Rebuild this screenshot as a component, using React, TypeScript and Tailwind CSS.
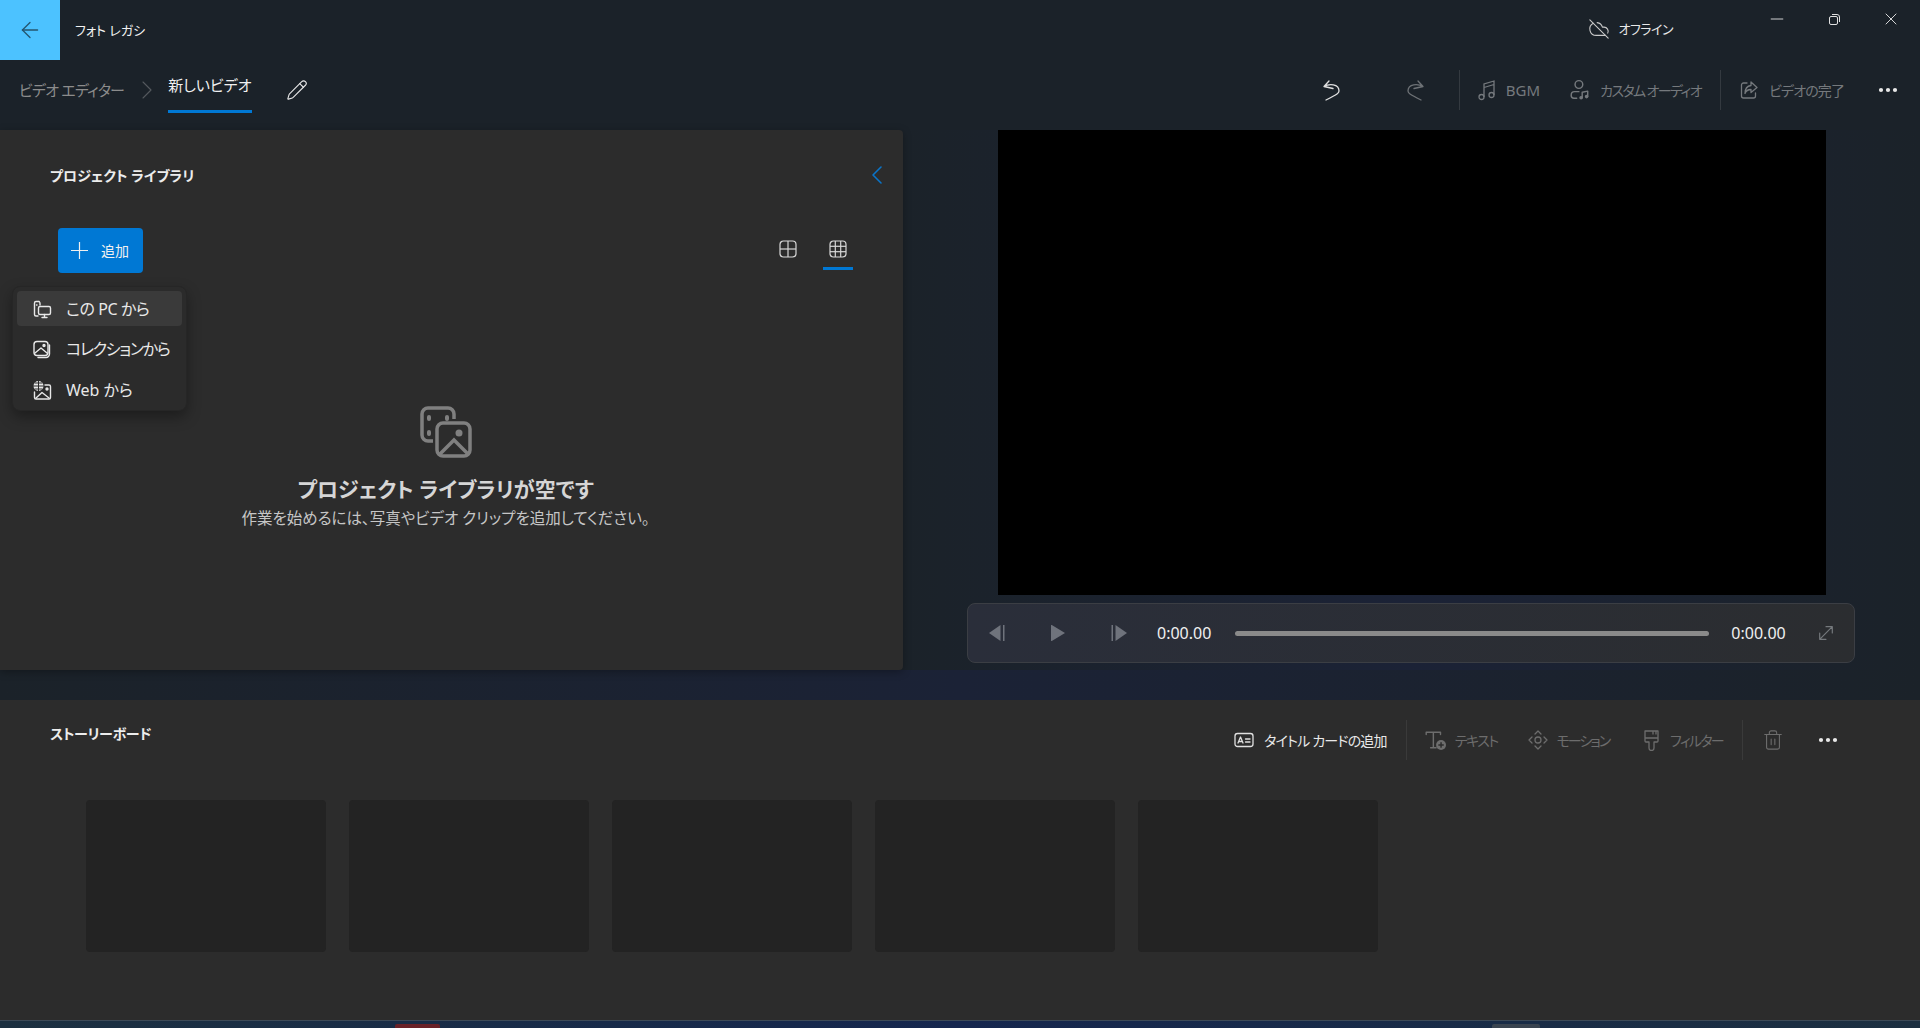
import React from 'react';
import { ArrowLeft, ChevronLeft, ChevronRight, Minus, X, MoreHorizontal, CloudOff, Pencil, Trash2 } from 'lucide-react';

const Ic = ({ s = 20, w = 1.3, children, className = '' }: { s?: number; w?: number; children: React.ReactNode; className?: string }) => (
  <svg width={s} height={s} viewBox="0 0 20 20" fill="none" stroke="currentColor" strokeWidth={w} strokeLinecap="round" strokeLinejoin="round" className={className}>
    {children}
  </svg>
);

const Divider = () => <div className="w-px h-10 bg-[#343a40]" />;

const GridIcon = ({ lines }: { lines: number[] }) => (
  <svg width="18" height="18" viewBox="0 0 18 18" fill="none" stroke="#d8d8d8" strokeWidth="1.2">
    <rect x="1" y="1" width="16" height="16" rx="3.5" />
    {lines.map(p => (
      <g key={p}>
        <path d={`M${p} 1v16`} />
        <path d={`M1 ${p}h16`} />
      </g>
    ))}
  </svg>
);

const MenuItem = ({ icon, label, active, track = '' }: { icon: React.ReactNode; label: string; active?: boolean; track?: string }) => (
  <div className={`flex items-center h-[35px] rounded-[4px] pl-[15px] ${active ? 'bg-[#3a3a3a]' : ''}`}>
    <span className="w-[20px] h-[20px] mr-[14px] text-[#e8e8e8]">{icon}</span>
    <span className={`text-[16px] text-[#e8e8e8] ${track}`}>{label}</span>
  </div>
);

const Card = () => <div className="w-[240px] h-[152px] rounded-[4px] bg-[#232323]" />;

export default function App() {
  return (
    <div className="w-full h-[1028px] overflow-hidden flex flex-col bg-[#1b2229] font-['Noto_Sans','Noto_Sans_CJK_JP',sans-serif] [font-feature-settings:'palt'] text-white">
      {/* title bar */}
      <div className="h-[60px] flex shrink-0">
        <div className="w-[60px] h-[60px] bg-[#4cc2ff] flex items-center justify-center text-[#24556f]">
          <ArrowLeft size={26} strokeWidth={1.2} />
        </div>
        <div className="ml-[15px] mt-[20px] text-[13px] leading-[20px] text-[#f2f2f2]">フォト レガシ</div>
        <div className="ml-auto flex items-start">
          <CloudOff size={22} strokeWidth={1.2} className="mt-[18px] text-[#c8c8c8]" />
          <span className="ml-[8px] mt-[19px] text-[13px] leading-[20px] tracking-[-0.5px] text-[#e8e8e8]">オフライン</span>
          <Minus size={20} strokeWidth={1.1} className="ml-[94px] mt-[9px] text-[#e0e0e0]" />
          <svg width="13" height="13" viewBox="0 0 13 13" fill="none" stroke="#e0e0e0" className="ml-[41px] mt-[13px]">
            <rect x="1.5" y="3.5" width="8" height="8" rx="1.5" />
            <path d="M4 1.5h5a2.5 2.5 0 0 1 2.5 2.5v5" />
          </svg>
          <X size={20} strokeWidth={1.1} className="ml-[40px] mr-[19px] mt-[9px] text-[#e8e8e8]" />
        </div>
      </div>

      {/* toolbar */}
      <div className="h-[70px] flex items-center pb-[10px] shrink-0">
        <span className="ml-[19px] text-[15px] tracking-[-0.8px] text-[#8c8c8c]">ビデオ エディター</span>
        <ChevronRight size={32} strokeWidth={0.8} className="ml-[7px] text-[#555a5e]" />
        <div className="ml-[5px] self-start h-[53px] pt-[13px] border-b-[3px] border-[#0078d4] text-[15px] leading-[24px] text-[#f0f0f0]">新しいビデオ</div>
        <Pencil size={22} strokeWidth={1.2} className="ml-[34px] text-[#e8e8e8]" />
        <div className="ml-auto flex items-center">
          <svg width="17" height="21" viewBox="0 0 17 21" fill="none" stroke="#e0e0e0" strokeWidth="1.3" strokeLinecap="round" strokeLinejoin="round">
            <path d="M6 1L1 6.500l9 2M1 6.500C6 3.500 16 3.500 16 11c0 2-1 3-13 9" />
          </svg>
          <svg width="17" height="21" viewBox="0 0 17 21" fill="none" stroke="#6e7276" strokeWidth="1.3" strokeLinecap="round" strokeLinejoin="round" className="ml-[67px]">
            <path d="M11 1l5 5.500-9 2M16 6.500C11 3.500 1 3.500 1 11c0 2 1 3 13 9" />
          </svg>
          <div className="ml-[35px]"><Divider /></div>
          <svg width="18" height="21" viewBox="0 0 18 21" fill="none" stroke="#75797d" strokeWidth="1.3" className="ml-[18px]">
            <circle cx="3.500" cy="17" r="2.500" />
            <circle cx="13.500" cy="15" r="2.500" />
            <path d="M6 17V4l10-3v14M6 7.500l10-3" />
          </svg>
          <span className="ml-[10px] text-[15px] text-[#75797d]">BGM</span>
          <Ic s={22} className="ml-[29px] text-[#75797d]">
            <circle cx="9" cy="5" r="3.500" />
            <path d="M9 11.500H5a3 3 0 0 0-3 3v.500a2.500 2.500 0 0 0 2.500 2.500H7" />
            <path d="M12 17v-5l5-1v5" />
            <circle cx="11" cy="17" r="1" fill="currentColor" />
            <circle cx="16" cy="16" r="1" fill="currentColor" />
          </Ic>
          <span className="ml-[9px] text-[14px] tracking-[-1.6px] text-[#75797d]">カスタム オーディオ</span>
          <div className="ml-[19px]"><Divider /></div>
          <Ic className="ml-[18px] text-[#75797d]">
            <path d="M8 3H4.500A2 2 0 0 0 2.500 5v11a2 2 0 0 0 2 2h10a2 2 0 0 0 2-2v-3" />
            <path d="M12 2l6 5.500-6 5V9.500c-3 0-5 1-6 4 0-4.500 2-7.500 6-8z" />
          </Ic>
          <span className="ml-[10px] text-[14px] tracking-[-0.9px] text-[#75797d]">ビデオの完了</span>
          <MoreHorizontal size={24} strokeWidth={2.2} className="ml-[32px] mr-[20px] text-[#e8e8e8]" />
        </div>
      </div>

      {/* library + preview */}
      <div className="h-[540px] flex shrink-0">
        <div className="relative w-[903px] h-full rounded-r-[4px] bg-[#2c2c2c] shadow-[0_2px_8px_rgba(0,0,0,0.3)] flex flex-col">
          <div className="flex items-center justify-between h-[90px] pl-[50px] pr-[10px]">
            <span className="text-[14px] font-bold text-[#ececec]">プロジェクト ライブラリ</span>
            <ChevronLeft size={32} strokeWidth={1.2} className="text-[#0a74c9]" />
          </div>
          <div className="flex items-start justify-between pl-[58px] pr-[50px] h-[178px] mt-[8px]">
            <div className="w-[85px] h-[45px] rounded-[4px] bg-[#0078d4] flex items-center pl-[13px]">
              <svg width="17" height="17" viewBox="0 0 17 17" fill="none" stroke="#f0f0f0" strokeWidth="1.200">
                <path d="M8.500 0v17M0 8.500h17" />
              </svg>
              <span className="ml-[13px] text-[14px] text-[#f0f0f0]">追加</span>
            </div>
            <div className="flex items-start">
              <div className="w-[30px] flex justify-center pt-[12px]"><GridIcon lines={[9]} /></div>
              <div className="ml-[20px] w-[30px] h-[42px] flex justify-center pt-[12px] border-b-[3px] border-[#0078d4]"><GridIcon lines={[6.3, 11.700]} /></div>
            </div>
          </div>
          <div className="flex flex-col items-center pr-[12px]">
            <svg width="52" height="52" viewBox="0 0 52 52" fill="none" stroke="#808080" strokeWidth="3.500">
              <path d="M13 35H8a6 6 0 0 1-6-6V8a6 6 0 0 1 6-6h20a6 6 0 0 1 6 6v5" />
              <path d="M9 11v2M9 26v2M27 11v2" strokeWidth="4" strokeLinecap="round" />
              <rect x="17" y="17" width="33" height="33" rx="6" />
              <circle cx="39" cy="27" r="3.500" fill="#808080" stroke="none" />
              <path d="M20 48l14-14 14 14" />
            </svg>
            <div className="mt-[14px] text-[21px] leading-[34px] font-semibold text-[#d6d6d6]">プロジェクト ライブラリが空です</div>
            <div className="text-[15.5px] leading-[24px] text-[#c6c6c6]">作業を始めるには、写真やビデオ クリップを追加してください。</div>
          </div>

          {/* add menu */}
          <div className="absolute left-[12px] top-[156px] w-[175px] h-[125px] rounded-[8px] bg-[#2b2b2b] border border-[#262626] shadow-[0_6px_14px_rgba(0,0,0,0.35)] p-[4px]">
            <MenuItem
              active
              label="この PC から"
              track="tracking-[-0.4px]"
              icon={
                <Ic w={1.4}>
                  <path d="M7 2.500H4a1.500 1.500 0 0 0-1.500 1.500v11.500a1.500 1.500 0 0 0 1.500 1.500h2" />
                  <path d="M8 6V4.500a2 2 0 0 0-1-2" />
                  <rect x="6.500" y="7.500" width="12" height="8" rx="1.500" />
                  <path d="M10 18.500h5M12.500 15.500v3M4.500 6h.5" />
                </Ic>
              }
            />
            <div className="mt-[5px]">
              <MenuItem
                label="コレクションから"
                track="tracking-[-1.3px]"
                icon={
                  <Ic w={1.4}>
                    <rect x="2" y="2.500" width="14" height="14" rx="3" />
                    <path d="M17.500 6v9a3.500 3.500 0 0 1-3.500 3.500H6" />
                    <path d="M3 14l6-5 6 5" />
                    <circle cx="12" cy="6.500" r="1" fill="currentColor" />
                  </Ic>
                }
              />
            </div>
            <div className="mt-[6px]">
              <MenuItem
                label="Web から"
                icon={
                  <Ic w={1.4}>
                    <circle cx="6.500" cy="6" r="5" fill="currentColor" stroke="none" />
                    <path d="M1.500 6h10M6.500 1v10M3 3h7M3 9h7" stroke="#2b2b2b" strokeWidth="1" />
                    <path d="M13 5h4a1.500 1.500 0 0 1 1.500 1.500v11a1.500 1.500 0 0 1-1.500 1.500H4A1.500 1.500 0 0 1 2.500 17.500V12" />
                    <path d="M4 18l6-5.500 7 5.500" />
                    <circle cx="15" cy="9" r="1" fill="currentColor" />
                  </Ic>
                }
              />
            </div>
          </div>
        </div>

        {/* preview */}
        <div className="flex-1 flex flex-col items-start pl-[64px] bg-gradient-to-r from-[#1b2229] via-[#1b2236] to-[#1b2229]">
          <div className="ml-[31px] w-[828px] h-[465px] bg-black" />
          <div className="mt-[8px] w-[888px] h-[60px] rounded-[8px] bg-gradient-to-r from-[#2a2e3a] to-[#2b2d30] border border-[#3b3e44] flex items-center">
            <svg width="18" height="18" viewBox="0 0 18 18" fill="#6f737c" className="ml-[20px]">
              <path d="M12.500 1v16L1 9zM15 1h1.500v16H15z" />
            </svg>
            <svg width="16" height="18" viewBox="0 0 16 18" fill="#6f737c" className="ml-[44px]">
              <path d="M1 1.500a.5.5 0 0 1 .8-.4L15 9 1.800 16.900a.5.5 0 0 1-.8-.4z" />
            </svg>
            <svg width="18" height="18" viewBox="0 0 18 18" fill="#6f737c" className="ml-[44px]">
              <path d="M5.500 1v16L17 9zM1.500 1H3v16H1.500z" />
            </svg>
            <span className="ml-[29px] text-[16px] text-[#f0f0f0]">0:00.00</span>
            <div className="ml-[24px] w-[474px] h-[5px] rounded-full bg-[#8a8a8a]" />
            <span className="ml-[22px] text-[16px] text-[#f0f0f0]">0:00.00</span>
            <Ic s={18} className="ml-[31px] text-[#75797d]">
              <path d="M3 17L17 3M10 3h7v7M3 10v7h7" />
            </Ic>
          </div>
        </div>
      </div>

      <div className="h-[30px] shrink-0 bg-gradient-to-r from-[#1b2229] via-[#1b2236] to-[#1b2229]" />

      {/* storyboard */}
      <div className="h-[320px] shrink-0 bg-[#2c2c2c] flex flex-col">
        <div className="h-[70px] flex items-start">
          <span className="ml-[50px] mt-[22px] text-[14px] leading-[24px] tracking-[-0.3px] font-bold text-[#ececec]">ストーリーボード</span>
          <div className="ml-auto mt-[20px] flex items-center text-[#6d6d6d]">
            <Ic className="text-[#e0e0e0]">
              <rect x="1" y="3.500" width="18" height="13" rx="2.500" />
              <path d="M4 13l2.500-6L9 13M4.800 11.500h3.400M11.500 9H16M11.500 12H16" />
            </Ic>
            <span className="ml-[10px] text-[14px] tracking-[-0.8px] text-[#e8e8e8]">タイトル カードの追加</span>
            <div className="ml-[19px]"><div className="w-px h-10 bg-[#3a3a3a]" /></div>
            <Ic s={22} className="ml-[17px]">
              <path d="M2 3h13M8.500 3v14M6 17h5M2 3v2M15 3v2" />
              <circle cx="15.500" cy="14.500" r="4.500" fill="currentColor" stroke="none" />
              <path d="M15.500 12.500v4M13.500 14.500h4" stroke="#2c2c2c" />
            </Ic>
            <span className="ml-[9px] text-[14px] tracking-[-1.5px]">テキスト</span>
            <Ic className="ml-[30px]">
              <path d="M10 1l3 3M10 1L7 4M10 19l3-3M10 19l-3-3M4 7l-3 3 3 3M16 7l3 3-3 3" />
              <circle cx="10" cy="10" r="3" />
            </Ic>
            <span className="ml-[9px] text-[14px] tracking-[-2px]">モーション</span>
            <svg width="17" height="21" viewBox="0 0 17 21" fill="none" stroke="currentColor" strokeWidth="1.3" strokeLinejoin="round" className="ml-[34px]">
              <path d="M2 1h13v10a1 1 0 0 1-1 1h-3v6a2.500 2.500 0 0 1-5 0v-6H3a1 1 0 0 1-1-1zM2 8h13M10 1v3.500M13 1v3.500" />
            </svg>
            <span className="ml-[10px] text-[14px] tracking-[-1.7px]">フィルター</span>
            <div className="ml-[19px]"><div className="w-px h-10 bg-[#3a3a3a]" /></div>
            <Trash2 size={22} strokeWidth={1.2} className="ml-[19px]" />
            <MoreHorizontal size={24} strokeWidth={2.2} className="ml-[32px] mr-[80px] text-[#e8e8e8]" />
          </div>
        </div>
        <div className="mt-[30px] ml-[86px] flex gap-[23px]">
          <Card /><Card /><Card /><Card /><Card />
        </div>
      </div>

      {/* desktop peeking through below the window */}
      <div className="flex-1 flex items-end border-t border-[#3d4a57] bg-gradient-to-r from-[#1c3040] via-[#15264e] to-[#1c2f40]">
        <div className="ml-[395px] w-[45px] h-[4px] rounded-t-[2px] bg-[#6a2228]" />
        <div className="ml-[1052px] w-[48px] h-[4px] rounded-t-[2px] bg-[#3a4450]" />
      </div>
    </div>
  );
}
